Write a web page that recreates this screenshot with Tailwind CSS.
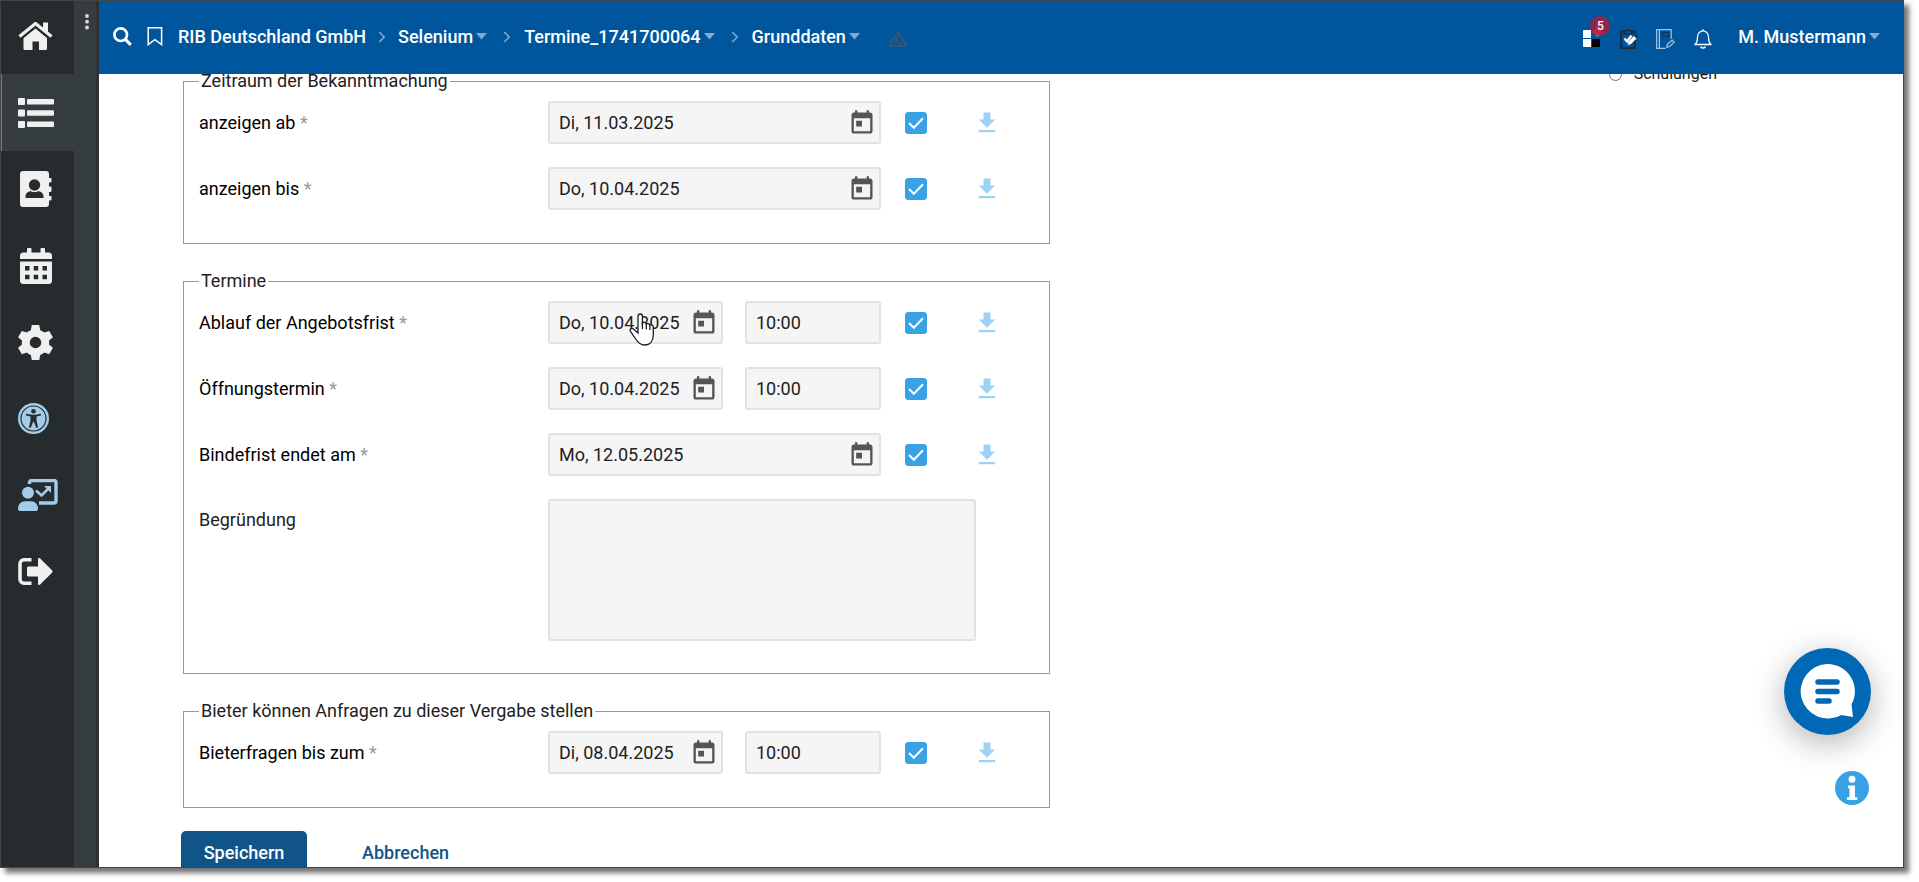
<!DOCTYPE html>
<html lang="de">
<head>
  <meta charset="UTF-8">
  <meta name="viewport" content="width=device-width, initial-scale=1.0">
  <title>Grunddaten</title>
  <script src="https://cdn.jsdelivr.net/npm/@tailwindcss/browser@4"></script>
</head>
<body class="h-screen overflow-hidden bg-white pr-[15px] pb-[14px] font-['Roboto',sans-serif] text-[18px] leading-6 text-[#212121]">

  <!-- Shared icons -->
  <svg class="hidden">
    <symbol id="today" viewBox="0 0 24 24"><path d="M19 3h-1V1h-2v2H8V1H6v2H5c-1.11 0-1.99.9-1.99 2L3 19c0 1.1.89 2 2 2h14c1.1 0 2-.9 2-2V5c0-1.1-.9-2-2-2zm0 16H5V8h14v11zM7 10h5v5H7z"/></symbol>
    <symbol id="download" viewBox="0 0 24 24"><path d="M19 9h-4V3H9v6H5l7 7 7-7zM5 18v2h14v-2H5z"/></symbol>
    <symbol id="caret" viewBox="0 0 11 7"><path d="M0 0h11L5.500 6.500z"/></symbol>
    <symbol id="chevron" viewBox="0 0 8 12"><path d="M1.200 1l5 5-5 5" fill="none" stroke="currentColor" stroke-width="1.600"/></symbol>
  </svg>

  <div class="flex h-full border border-[#444] bg-white shadow-[5px_5px_5px_rgba(0,0,0,0.55)]">

    <!-- Sidebar -->
    <nav class="flex w-[73px] shrink-0 flex-col bg-[#262b2d] text-[#f0f0f0]" aria-label="Hauptmenü">
      <a href="#" aria-label="Startseite" class="flex h-[73px] items-center pl-[17px]">
        <svg class="mb-1 h-[28px] w-[35px]" viewBox="0 0 35 28" fill="currentColor">
          <path d="M17.500 6.500L29 16v10.500a1.500 1.500 0 0 1-1.500 1.500H21v-8.500h-6.500V28H7a1.500 1.500 0 0 1-1.500-1.500V16z"/>
          <path d="M1.500 15.500L17.500 1.800 33.500 15.500" fill="none" stroke="#262b2d" stroke-width="6"/>
          <path d="M1.500 14.500L17.500 1.500 33.500 14.500" fill="none" stroke="currentColor" stroke-width="3.200" stroke-linejoin="round"/>
          <path d="M25 .5h5v11l-5-4.500z"/>
        </svg>
      </a>
      <a href="#" aria-label="Liste" class="flex h-[77px] items-center border-l border-[#3b8fce] bg-[#363d40] pl-4">
        <svg class="h-[30px] w-[36px]" viewBox="0 0 36 30" fill="currentColor">
          <rect y="0" width="7" height="7" rx="1"/><rect y="11.500" width="7" height="7" rx="1"/><rect y="23" width="7" height="7" rx="1"/>
          <rect x="9" y="1" width="27" height="5.500" rx="1"/><rect x="9" y="12.200" width="27" height="5.500" rx="1"/><rect x="9" y="23.500" width="27" height="5.500" rx="1"/>
        </svg>
      </a>
      <a href="#" aria-label="Kontakte" class="flex h-[76px] items-center pl-[19px]">
        <svg class="h-[36px] w-[32px]" viewBox="0 0 32 36" fill="currentColor">
          <path fill-rule="evenodd" d="M3 0h23a3 3 0 0 1 3 3v4h1.500a1 1 0 0 1 1 1v2.500a1 1 0 0 1-1 1H29v4h1.500a1 1 0 0 1 1 1V20a1 1 0 0 1-1 1H29v4h1.500a1 1 0 0 1 1 1v2.500a1 1 0 0 1-1 1H29V33a3 3 0 0 1-3 3H3a3 3 0 0 1-3-3V3a3 3 0 0 1 3-3z"/>
          <circle cx="14.500" cy="14" r="5.700" fill="#262b2d"/>
          <path d="M5.500 27v-1.500c0-3 2.500-5.200 5.500-5.200 1.200.6 2.300.8 3.500.8s2.300-.2 3.500-.8c3 0 5.500 2.200 5.500 5.200V27z" fill="#262b2d"/>
        </svg>
      </a>
      <a href="#" aria-label="Kalender" class="flex h-[77px] items-center pl-[19px]">
        <svg class="h-[36px] w-[32px]" viewBox="0 0 32 36">
          <path d="M8 0h2.500a1 1 0 0 1 1 1v3.500h9V1a1 1 0 0 1 1-1H24a1 1 0 0 1 1 1v3.500h3.500A3.200 3.200 0 0 1 32 8v3H0V8a3.200 3.200 0 0 1 3.500-3.500H7V1a1 1 0 0 1 1-1zM0 13.500h32v19a3.200 3.200 0 0 1-3.500 3.500h-25A3.200 3.200 0 0 1 0 32.500z" fill="currentColor"/>
          <path d="M5 18h4.500v4.500H5zM13.700 18h4.500v4.500h-4.500zM22.500 18H27v4.500h-4.500zM5 26.700h4.500v4.500H5zM13.700 26.700h4.500v4.500h-4.500zM22.500 26.700H27v4.500h-4.500z" fill="#262b2d"/>
        </svg>
      </a>
      <a href="#" aria-label="Einstellungen" class="flex h-[76px] items-center pl-3">
        <svg class="h-[45px] w-[45px]" viewBox="-12 -12 24 24" fill="currentColor">
          <path fill-rule="evenodd" d="M-2-9.300h4l.5 2.700a7 7 0 0 1 2.200 1.300L7.300-6.200l2 3.400L7.200-1.100a7.500 7.500 0 0 1 0 2.200L9.300 2.800l-2 3.400-2.600-.9A7 7 0 0 1 2.500 6.600L2 9.300h-4l-.5-2.700a7 7 0 0 1-2.200-1.300l-2.600.9-2-3.400 2.100-1.700a7.500 7.500 0 0 1 0-2.200L-9.300-2.800l2-3.400 2.600.9a7 7 0 0 1 2.200-1.300zM0-3.100a3.100 3.100 0 1 0 0 6.200 3.100 3.100 0 0 0 0-6.200z"/>
        </svg>
      </a>
      <a href="#" aria-label="Barrierefreiheit" class="flex h-[76px] items-center pl-[17px] text-[#a5cbea]">
        <svg class="h-[31px] w-[31px]" viewBox="0 0 31 31">
          <circle cx="15.500" cy="15.500" r="15.500" fill="currentColor"/>
          <circle cx="15.500" cy="15.500" r="12.500" fill="none" stroke="#262b2d" stroke-width="1.200"/>
          <g fill="#262b2d"><circle cx="15.500" cy="8.200" r="2.300"/>
          <path d="M8.200 10.800c4.500 1.300 10 1.300 14.600 0l.4 1.500c-1.500.6-3 1-4.700 1.300v4l1.600 6.800-1.900.4-2.300-6h-.8l-2.300 6-1.900-.4 1.600-6.800v-4c-1.700-.3-3.200-.7-4.700-1.300z"/></g>
        </svg>
      </a>
      <a href="#" aria-label="Schulungen" class="flex h-[77px] items-center pl-[17px] text-[#a5cbea]">
        <svg class="h-[32px] w-[40px]" viewBox="0 0 40 32" fill="currentColor">
          <path d="M11.500 5V3.500a2 2 0 0 1 2-2H36a2 2 0 0 1 2 2V22a2 2 0 0 1-2 2H21" fill="none" stroke="currentColor" stroke-width="3.400"/>
          <circle cx="10" cy="13.700" r="6"/>
          <path d="M0 29.500C0 25.500 3 22.300 7 22.300h6c4 0 7 3.200 7 7.200 0 1.500-.7 2.500-2 2.500H2c-1.300 0-2-1-2-2.500z"/>
          <path d="M18 11.500l5.500 5 6.500-6.500" fill="none" stroke="currentColor" stroke-width="2.600"/>
          <path d="M26 7h7v7z"/>
        </svg>
      </a>
      <a href="#" aria-label="Abmelden" class="flex h-[76px] items-center pl-[17px]">
        <svg class="h-[27px] w-[35px]" viewBox="0 0 35 27" fill="currentColor">
          <path d="M13.500 1.800H6a4 4 0 0 0-4 4v15.400a4 4 0 0 0 4 4h7.500" fill="none" stroke="currentColor" stroke-width="3.600"/>
          <path d="M10.500 8.500H20V1.500c0-1.500 1.300-1.900 2.200-1L34 12.300c.8.800.8 1.600 0 2.400L22.200 26.500c-.9.900-2.200.5-2.200-1V18.500h-9.500c-.9 0-1.500-.6-1.500-1.500v-7c0-.9.600-1.500 1.500-1.500z"/>
        </svg>
      </a>
    </nav>
    <div class="flex w-[25px] shrink-0 justify-center border-r-3 border-[#2b3134] bg-[#363d40]">
      <button type="button" aria-label="Menü" class="mt-[13px] ml-[3px] h-4 w-4 text-[#dcdcdc]">
        <svg class="h-4 w-4" viewBox="0 0 16 16" fill="currentColor"><circle cx="8" cy="2" r="1.900"/><circle cx="8" cy="7.700" r="1.900"/><circle cx="8" cy="13.500" r="1.900"/></svg>
      </button>
    </div>

    <div class="flex min-w-0 grow flex-col">
      <!-- Top bar -->
      <header class="z-10 flex h-[73px] shrink-0 items-center bg-[#00569c] pl-[14px] pr-[23px] pb-[2px] font-medium text-white">
        <button type="button" aria-label="Suche" class="mr-[15px]">
          <svg class="h-[19px] w-[19px]" viewBox="0 0 19 19" fill="none" stroke="currentColor" stroke-width="2.700"><circle cx="7.700" cy="7.700" r="6.300"/><path d="M12.300 12.300l5.500 5.500" stroke-width="3.200"/></svg>
        </button>
        <button type="button" aria-label="Lesezeichen" class="mr-[15px]">
          <svg class="h-[19px] w-[16px]" viewBox="0 0 16 19" fill="none" stroke="currentColor" stroke-width="1.500"><path d="M1.200.8h13.400v16.800L7.900 12.600 1.200 17.600z"/></svg>
        </button>
        <nav class="flex items-center" aria-label="Pfad">
          <a href="#">RIB Deutschland GmbH</a>
          <svg class="mx-3 h-3 w-2 text-[#86a9cb]"><use href="#chevron"/></svg>
          <a href="#" class="flex items-center gap-[3px]">Selenium <svg class="h-[7px] w-[11px] fill-[#86a9cb]"><use href="#caret"/></svg></a>
          <svg class="ml-4 mr-[13px] h-3 w-2 text-[#86a9cb]"><use href="#chevron"/></svg>
          <a href="#" class="flex items-center gap-[3px]">Termine_1741700064 <svg class="h-[7px] w-[11px] fill-[#86a9cb]"><use href="#caret"/></svg></a>
          <svg class="ml-4 mr-[13px] h-3 w-2 text-[#86a9cb]"><use href="#chevron"/></svg>
          <a href="#" class="flex items-center gap-[3px]">Grunddaten <svg class="h-[7px] w-[11px] fill-[#86a9cb]"><use href="#caret"/></svg></a>
        </nav>
        <svg class="mt-1 ml-7 h-4 w-5" viewBox="0 0 20 16" fill="none" stroke="#4c5460" stroke-width="1.500" stroke-linejoin="round"><path d="M10 1l9 14H1z"/><path d="M10 6l-1.500 3 2 1.500.5 2.500M8.500 9L7 13M12 12.500h2.500" stroke-width="1.300"/></svg>

        <div class="ml-auto flex items-center">
          <button type="button" aria-label="Apps, 5 neue" class="relative mt-[4px] mr-5">
            <svg class="h-[17px] w-[17px] overflow-visible" viewBox="0 0 17 17"><path d="M0 1a1 1 0 0 1 1-1h7v8H0zM0 9h8v8H1a1 1 0 0 1-1-1z" fill="#fff"/><path d="M9 9h8v7a1 1 0 0 1-1 1H9z" fill="#000"/><path d="M14.500-3l5 5-5 5-5-5z" fill="#ff5a63"/></svg>
            <span class="absolute -top-[14px] left-[7px] h-[20px] w-[20px] rounded-full bg-[#b01c3a]/80 text-center text-[12px] leading-[20px]">5</span>
          </button>
          <button type="button" aria-label="Aufgaben" class="mt-[4px] mr-[18px]">
            <svg class="h-[21px] w-[18px] overflow-visible" viewBox="0 0 18 21" fill="none"><path d="M5 3.500H1.200V20H14.800V12M11 3.500h3.800V6" stroke="#222b33" stroke-width="2"/><path d="M4 6V3h2.200a2 2 0 0 1 3.800 0h2v3z" stroke="#222b33" stroke-width="1.600"/><path d="M4.500 10.500l2.500 3 4.500-6" stroke="#fff" stroke-width="2.200"/><path d="M7.500 17l1-3.500 5.500-5.500 2.500 2.500-5.500 5.500z" fill="#fff"/><path d="M14 7.500l1.500-1.500 2.500 2.500-1.500 1.500z" fill="#222b33"/></svg>
          </button>
          <button type="button" aria-label="Notizen" class="mt-[4px] mr-[19px]">
            <svg class="h-[20px] w-[19px]" viewBox="0 0 19 20" fill="none" stroke="#a9c6e0" stroke-width="1.200"><path d="M9.500 19.300H.7V.7h14.500v9M3.400.7v18.600"/><path d="M6 3.700h6.500v3.600H6z" stroke="#123a60" stroke-width="1.500"/><path d="M10.800 18.200l.6-2.900 4.800-4.300 2 2-4.600 4.500z"/></svg>
          </button>
          <button type="button" aria-label="Benachrichtigungen" class="mt-[4px] mr-[26px]">
            <svg class="h-[20px] w-[18px]" viewBox="0 0 18 20" fill="none" stroke="currentColor" stroke-width="1.300"><path d="M9 .3v1.500M1 15.500c2-1.800 2.500-3.500 2.500-7.500C3.500 4.500 6 1.900 9 1.900S14.500 4.500 14.500 8c0 4 .5 5.700 2.500 7.500z" stroke-linejoin="round"/><path d="M6.500 17.500c.5 2 4.500 2 5 0"/></svg>
          </button>
          <button type="button" class="flex items-center gap-[3px]">M. Mustermann <svg class="h-[7px] w-[11px] fill-[#86a9cb]"><use href="#caret"/></svg></button>
        </div>
      </header>

      <!-- Content, scrolled under the top bar -->
      <main class="flex min-h-0 grow justify-between overflow-hidden">
        <form class="-mt-[5px] ml-[82px] w-full max-w-[869px]">
          <fieldset class="ml-[2px] border border-[#999] px-[15px] pt-2 pb-[10px]">
            <legend class="px-[2px]">Zeitraum der Bekanntmachung</legend>
            <div id="zeitraum"></div>
          </fieldset>

          <fieldset class="mt-[25px] ml-[2px] border border-[#999] px-[15px] pt-2 pb-8">
            <legend class="px-[2px]">Termine</legend>
            <div id="termine"></div>
            <div class="flex">
              <label for="begruendung" class="w-[349px] shrink-0 pt-[9px]">Begründung</label>
              <textarea id="begruendung" class="block h-[142px] w-[428px] resize-none rounded-[3px] border-2 border-[#e2e2e2] bg-[#f5f5f5] px-[9px] py-2"></textarea>
            </div>
          </fieldset>

          <fieldset class="mt-[25px] ml-[2px] border border-[#999] px-[15px] pt-2 pb-[10px]">
            <legend class="px-[2px]">Bieter können Anfragen zu dieser Vergabe stellen</legend>
            <div id="anfragen"></div>
          </fieldset>

          <div class="mt-[23px] flex gap-8 font-medium">
            <button type="submit" class="h-[44px] w-[126px] rounded-[5px] bg-[#115488] text-white">Speichern</button>
            <button type="button" class="h-[44px] px-[23px] text-[#115488]">Abbrechen</button>
          </div>
        </form>

        <div class="-mt-[12px] mr-[186px]">
          <label class="flex items-center gap-3 text-[16px]">
            <input type="radio" name="ansicht" class="h-[13px] w-[13px] appearance-none rounded-full border border-[#777] bg-white">
            Schulungen
          </label>
        </div>
      </main>
    </div>
  </div>

  <!-- Floating help buttons -->
  <button type="button" aria-label="Chat öffnen" class="fixed right-12 bottom-[147px] flex h-[87px] w-[87px] items-center justify-center rounded-full bg-[#0068b4] shadow-[0_8px_32px_rgba(0,0,0,0.3)]">
    <svg class="h-[55px] w-[55px]" viewBox="0 0 55 55"><path d="M27.500 0a27.300 27.300 0 0 1 24 40.500L53 53l-11.500-2A27.300 27.300 0 1 1 27.500 0z" fill="#fff"/><path d="M18 18h19M18 27.500h19M18 37h11" stroke="#0068b4" stroke-width="5.500" stroke-linecap="round"/></svg>
  </button>
  <button type="button" aria-label="Information" class="fixed right-[50px] bottom-[77px] h-[34px] w-[34px] rounded-full bg-[#38a2e4]">
    <svg class="h-[34px] w-[34px]" viewBox="0 0 34 34" fill="#fff"><circle cx="17" cy="8.300" r="3.500"/><path d="M13 14.500h7v11.700h2.200v2.800H12v-2.800h2.500v-8.900H13z"/></svg>
  </button>

  <script>
    const rows = {
      zeitraum: [
        { id: 'ab', label: 'anzeigen ab', date: 'Di, 11.03.2025' },
        { id: 'bis', label: 'anzeigen bis', date: 'Do, 10.04.2025' }
      ],
      termine: [
        { id: 'angebotsfrist', label: 'Ablauf der Angebotsfrist', date: 'Do, 10.04.2025', time: '10:00', pointer: true },
        { id: 'oeffnung', label: 'Öffnungstermin', date: 'Do, 10.04.2025', time: '10:00' },
        { id: 'bindefrist', label: 'Bindefrist endet am', date: 'Mo, 12.05.2025' }
      ],
      anfragen: [
        { id: 'fragen', label: 'Bieterfragen bis zum', date: 'Di, 08.04.2025', time: '10:00' }
      ]
    };

    const field = 'block h-[43px] w-full rounded-[3px] border-2 border-[#e2e2e2] bg-[#f5f5f5] px-[9px]';

    const pointer = `
      <svg class="pointer-events-none absolute top-3 left-[81px] h-[33px] w-[26px]" viewBox="0 0 26 33">
        <path d="M9 20V3.200a2.200 2.200 0 0 1 4.400 0V10c.8-1.200 3.500-.9 3.900 1 1-1 3.300-.6 3.600 1.200 1.200-.8 3.400 0 3.400 2V22c0 6-3.300 10-8.800 10-4.500 0-6.500-2.500-8.800-6l-5.200-7.700c-1.200-2 1-3.700 3-2.300z" fill="#fff" stroke="#1c1c28" stroke-width="1.300"/>
        <path d="M13.400 9.500V16M17.300 11v5.500M20.900 12.200V17" stroke="#1c1c28" stroke-width="1.300"/>
      </svg>`;

    function renderRow(row) {
      return `
        <div class="mb-[23px] flex items-center">
          <label for="${row.id}" class="w-[349px] shrink-0 text-black">${row.label} <span class="text-[#999]">*</span></label>
          <div class="flex w-[333px] gap-[22px]">
            <div class="relative grow">
              <input id="${row.id}" type="text" value="${row.date}" class="${field}">
              <button type="button" aria-label="Datum wählen" class="absolute top-2 right-[5px]">
                <svg class="h-7 w-7 fill-[#555]"><use href="#today"/></svg>
              </button>
              ${row.pointer ? pointer : ''}
            </div>
            ${row.time ? `<div class="w-[136px] shrink-0"><input type="text" aria-label="${row.label} Uhrzeit" value="${row.time}" class="${field}"></div>` : ''}
          </div>
          <div class="ml-6 grid h-[22px] w-[22px]">
            <input type="checkbox" checked aria-label="${row.label} aktiv" class="col-start-1 row-start-1 h-[22px] w-[22px] appearance-none rounded-[3px] border border-[#38a2e4] checked:bg-[#38a2e4]">
            <svg class="pointer-events-none col-start-1 row-start-1 h-[22px] w-[22px]" viewBox="0 0 22 22" fill="none" stroke="#fff" stroke-width="2"><path d="M4 11l4.800 4.800L18 6.300"/></svg>
          </div>
          <button type="button" aria-label="Übernehmen" class="ml-[46px]"><svg class="h-7 w-7 fill-[#9dd2f5]"><use href="#download"/></svg></button>
        </div>`;
    }

    for (const id in rows) {
      document.getElementById(id).innerHTML = rows[id].map(renderRow).join('');
    }
  </script>
</body>
</html>
